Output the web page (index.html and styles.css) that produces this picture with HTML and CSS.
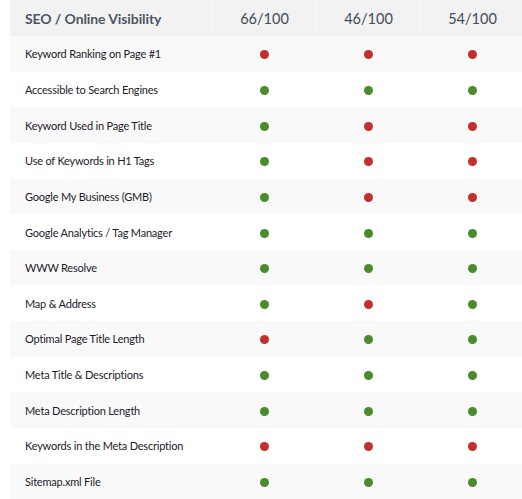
FILE: index.html
```html
<!DOCTYPE html>
<html>
<head>
<meta charset="utf-8">
<link rel="stylesheet" href="styles.css">
</head>
<body>
<div class="table">
  <div class="row head">
    <div class="cell name">SEO / Online Visibility</div>
    <div class="cell score">66/100</div>
    <div class="cell score">46/100</div>
    <div class="cell score">54/100</div>
  </div>
  <div class="row"><div class="cell name">Keyword Ranking on Page #1</div><div class="cell"><span class="dot r"></span></div><div class="cell"><span class="dot r"></span></div><div class="cell"><span class="dot r"></span></div></div>
  <div class="row"><div class="cell name">Accessible to Search Engines</div><div class="cell"><span class="dot g"></span></div><div class="cell"><span class="dot g"></span></div><div class="cell"><span class="dot g"></span></div></div>
  <div class="row"><div class="cell name">Keyword Used in Page Title</div><div class="cell"><span class="dot g"></span></div><div class="cell"><span class="dot r"></span></div><div class="cell"><span class="dot r"></span></div></div>
  <div class="row"><div class="cell name">Use of Keywords in H1 Tags</div><div class="cell"><span class="dot g"></span></div><div class="cell"><span class="dot r"></span></div><div class="cell"><span class="dot r"></span></div></div>
  <div class="row"><div class="cell name">Google My Business (GMB)</div><div class="cell"><span class="dot g"></span></div><div class="cell"><span class="dot r"></span></div><div class="cell"><span class="dot r"></span></div></div>
  <div class="row"><div class="cell name">Google Analytics / Tag Manager</div><div class="cell"><span class="dot g"></span></div><div class="cell"><span class="dot g"></span></div><div class="cell"><span class="dot g"></span></div></div>
  <div class="row"><div class="cell name">WWW Resolve</div><div class="cell"><span class="dot g"></span></div><div class="cell"><span class="dot g"></span></div><div class="cell"><span class="dot g"></span></div></div>
  <div class="row"><div class="cell name">Map &amp; Address</div><div class="cell"><span class="dot g"></span></div><div class="cell"><span class="dot r"></span></div><div class="cell"><span class="dot g"></span></div></div>
  <div class="row"><div class="cell name">Optimal Page Title Length</div><div class="cell"><span class="dot r"></span></div><div class="cell"><span class="dot g"></span></div><div class="cell"><span class="dot g"></span></div></div>
  <div class="row"><div class="cell name">Meta Title &amp; Descriptions</div><div class="cell"><span class="dot g"></span></div><div class="cell"><span class="dot g"></span></div><div class="cell"><span class="dot g"></span></div></div>
  <div class="row"><div class="cell name">Meta Description Length</div><div class="cell"><span class="dot g"></span></div><div class="cell"><span class="dot g"></span></div><div class="cell"><span class="dot g"></span></div></div>
  <div class="row"><div class="cell name">Keywords in the Meta Description</div><div class="cell"><span class="dot r"></span></div><div class="cell"><span class="dot r"></span></div><div class="cell"><span class="dot r"></span></div></div>
  <div class="row"><div class="cell name">Sitemap.xml File</div><div class="cell"><span class="dot g"></span></div><div class="cell"><span class="dot g"></span></div><div class="cell"><span class="dot g"></span></div></div>
</div>
</body>
</html>
```
FILE: styles.css
```css
html, body {
  margin: 0;
  padding: 0;
  background: #ffffff;
  overflow: hidden;
}
body {
  font-family: Lato, "Liberation Sans", sans-serif;
  padding-left: 10px;
}
.table {
  width: 514px;
  display: flex;
  flex-direction: column;
}
.row {
  display: grid;
  grid-template-columns: 202px 104px 104px 104px;
  height: 35.65px;
  background: #ffffff;
}
.row:nth-child(even) {
  background: #f9f9f9;
}
.row.head {
  height: 36px;
  background: #f2f2f2;
}
.head .cell + .cell {
  border-left: 1px solid #f7f7f7;
}
.cell {
  display: flex;
  align-items: center;
  justify-content: center;
}
.cell.name {
  justify-content: flex-start;
  padding-left: 15px;
  font-size: 11px;
  letter-spacing: -0.2px;
  color: #1d1a2a;
}
.head .cell.name {
  font-size: 14px;
  font-weight: 700;
  letter-spacing: -0.1px;
  color: #4b5866;
}
.head .score {
  font-size: 14.5px;
  color: #3f4b5b;
  padding-top: 1px;
}
.dot {
  width: 9px;
  height: 9px;
  border-radius: 50%;
  display: block;
  margin-top: 2px;
}
.dot.r { background: #c3302b; }
.dot.g { background: #4a8c2a; }
```
